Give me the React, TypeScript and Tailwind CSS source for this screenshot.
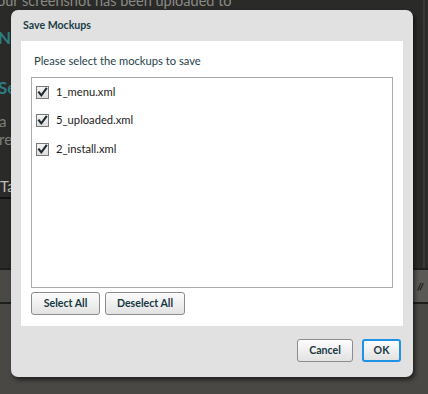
import React from "react";

const font = { fontFamily: 'Lato, "Open Sans", sans-serif' };

function Check() {
  return (
    <span className="flex h-[13px] w-[13px] items-center justify-center border border-[#7a7a7a] bg-gradient-to-b from-[#f4f4f4] to-[#dcdcdc]">
      <svg width="11" height="11" viewBox="0 0 11 11">
        <path d="M2 5.5 L4.3 8.3 L9.2 1.8" stroke="#1e2a30" strokeWidth="2.1" fill="none" strokeLinecap="square" />
      </svg>
    </span>
  );
}

function Row({ label }: { label: string }) {
  return (
    <div className="flex h-[28.5px] items-center gap-[7px] pl-[4px]">
      <Check />
      <span className="text-[11.2px] text-[#1a1a1a]">{label}</span>
    </div>
  );
}

function Btn({ children, w, primary }: { children: React.ReactNode; w: string; primary?: boolean }) {
  return (
    <button
      className={`${w} flex h-[23px] items-center justify-center rounded-[3px] bg-gradient-to-b from-[#fdfdfd] to-[#e2e2e2] text-[10.6px] font-bold text-[#173843] ${
        primary ? "border-2 border-[#1f92e6]" : "border border-[#8c8c8c]"
      }`}
    >
      {children}
    </button>
  );
}

export default function App() {
  return (
    <div className="relative h-[394px] w-[428px] overflow-hidden bg-[#2a2a28]" style={font}>
      {/* background page */}
      <div className="flex h-full flex-col">
        <div className="flex h-[268px] flex-col">
          <div className="-mt-[9px] ml-[-3px] whitespace-nowrap text-[14.5px] leading-[20px] text-[#8a8a86]">our screenshot has been uploaded to</div>
          <div className="mt-[17px] ml-[-2px] text-[17px] font-bold leading-[20px] text-[#2c7c84]">NA</div>
          <div className="mt-[30px] ml-[-2px] text-[17px] font-bold leading-[20px] text-[#2c7c84]">Se</div>
          <div className="mt-[14px] ml-[-1px] text-[15px] leading-[18px] text-[#7e7e7a]">a</div>
          <div className="ml-[-1px] text-[15px] leading-[18px] text-[#7e7e7a]">re</div>
          <div className="mt-[28px] h-[23px] w-[20px] overflow-hidden whitespace-nowrap border-b-2 border-[#111] text-[15px] leading-[21px] text-[#bdbdb8]">Tak</div>
        </div>
        <div className="flex h-[36px] border-y-2 border-[#1e1e1c] bg-[#4a4946]">
          <div className="flex-1" />
          <div className="flex w-[16px] items-center justify-center border-l border-[#222] bg-[#5a5956] text-[10px] font-bold text-[#111]">//</div>
        </div>
        <div className="flex-1 bg-[#4a4844]" />
      </div>
      <div className="absolute right-[3px] top-0 h-[268px] w-[2px] bg-[#3a3a38]" />

      {/* dialog */}
      <div className="absolute left-[11px] top-[10px] flex h-[367px] w-[402px] flex-col rounded-[7px] bg-[#e1e1e1] shadow-[2px_3px_4px_rgba(0,0,0,0.55)]">
        <div className="flex h-[31px] items-center pl-[12px] pt-[1px] text-[10.6px] font-bold text-[#1a3c46]">Save Mockups</div>
        <div className="mx-[10px] flex h-[285px] flex-col bg-white px-[10px]">
          <div className="mt-[12px] pl-[3px] text-[11.2px] leading-[16px] text-[#1f3f4a]">Please select the mockups to save</div>
          <div className="mt-[8px] flex h-[211px] flex-col border border-[#ababab]">
            <Row label="1_menu.xml" />
            <Row label="5_uploaded.xml" />
            <Row label="2_install.xml" />
          </div>
          <div className="mt-[4px] flex gap-[5px]">
            <Btn w="w-[69px]">Select All</Btn>
            <Btn w="w-[80px]">Deselect All</Btn>
          </div>
        </div>
        <div className="mt-[13px] flex justify-end gap-[9px] pr-[12px]">
          <Btn w="w-[56px]">Cancel</Btn>
          <Btn w="w-[39px]" primary>OK</Btn>
        </div>
      </div>
    </div>
  );
}
